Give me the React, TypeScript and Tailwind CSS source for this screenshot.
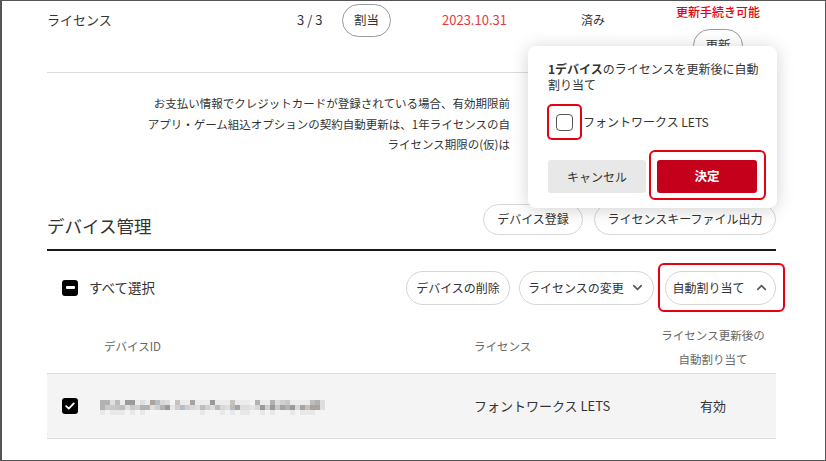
import React from "react";
import { ChevronDown, ChevronUp } from "lucide-react";

const FONT = { fontFamily: '"Noto Sans CJK JP", "Noto Sans", sans-serif' };

function Mosaic() {
  const cols = 45;
  const rows = 3;
  const palette = ["#c9c9c9", "#bdbdbd", "#d8d8d8", "#b2b2b2", "#a8a39e", "#c8c2ba", "#dedede", "#b8bcc4", "#9c9a98", "#cfcfcf"];
  let seed = 11;
  const rnd = () => {
    seed = (seed * 1103515245 + 12345) % 2147483648;
    return seed / 2147483648;
  };
  const gaps = new Set([14, 30]);
  const cells: React.ReactNode[] = [];
  for (let r = 0; r < rows; r++) {
    for (let c = 0; c < cols; c++) {
      let col: string;
      if (gaps.has(c)) col = r === 1 ? "#e6e6e6" : "transparent";
      else if (r === 0) col = rnd() < 0.3 ? "#ececec" : palette[Math.floor(rnd() * palette.length)];
      else if (r === 2) col = rnd() < 0.55 ? "transparent" : "#e8e8e8";
      else col = palette[Math.floor(rnd() * palette.length)];
      cells.push(<div key={r + "-" + c} style={{ backgroundColor: col }} className="w-[5px] h-[5px]" />);
    }
  }
  return <div className="grid grid-cols-[repeat(45,5px)]">{cells}</div>;
}

export default function App() {
  return (
    <div style={FONT} className="relative w-[826px] h-[461px] overflow-hidden bg-white border border-l-2 border-[#555] text-[#333]">
      <div className="ml-[45px] w-[729px]">
        {/* top license row */}
        <div className="h-[72px] border-b border-[#dcdcdc] flex items-start">
          <div className="flex items-center h-[38px]">
            <span className="w-[250px] text-[13px]">ライセンス</span>
            <span className="w-[45px] text-[13px]">3 / 3</span>
            <span className="w-[49px] h-[33px] rounded-full border border-[#999] flex items-center justify-center text-[12.5px]">割当</span>
            <span className="ml-[51px] w-[139px] text-[13px] text-[#e8383d]">2023.10.31</span>
            <span className="text-[12px]">済み</span>
          </div>
          <div className="ml-auto mr-[17px] w-[82px] flex flex-col items-center pt-[2px]">
            <span className="text-[12px] leading-[18px] text-[#e60012] font-medium whitespace-nowrap">更新手続き可能</span>
            <span className="mt-[8px] w-[50px] h-[33px] rounded-full border border-[#999] flex items-center justify-center text-[12.5px]">更新</span>
          </div>
        </div>

        {/* notice */}
        <div className="w-[463px] pt-[20px] text-right text-[11.5px] leading-[20.5px] text-[#333] whitespace-nowrap">
          <div>お支払い情報でクレジットカードが登録されている場合、有効期限前</div>
          <div>アプリ・ゲーム組込オプションの契約自動更新は、1年ライセンスの自</div>
          <div>ライセンス期限の(仮)は</div>
        </div>

        {/* heading */}
        <div className="mt-[49px] h-[47px] border-b-2 border-[#1a1a1a] flex items-start">
          <h2 className="mt-[10px] text-[17.5px] leading-[24px] font-normal">デバイス管理</h2>
          <div className="ml-auto flex gap-[11px]">
            <span className="w-[100px] h-[31px] rounded-full border border-[#d6d6d6] flex items-center justify-center text-[12px] whitespace-nowrap">デバイス登録</span>
            <span className="w-[182px] h-[31px] rounded-full border border-[#d6d6d6] flex items-center justify-center text-[12px] whitespace-nowrap">ライセンスキーファイル出力</span>
          </div>
        </div>

        {/* toolbar */}
        <div className="pt-[20px] pb-[16px] flex items-center">
          <span className="ml-[15px] w-[16px] h-[16px] rounded-[3px] bg-black flex items-center justify-center">
            <span className="w-[9px] h-[3px] bg-white rounded-[1px]" />
          </span>
          <span className="ml-[11px] text-[13.5px]">すべて選択</span>
          <div className="ml-auto flex items-center">
            <span className="w-[104px] h-[34px] rounded-full border border-[#d6d6d6] flex items-center justify-center text-[12px] whitespace-nowrap">デバイスの削除</span>
            <span className="ml-[9px] w-[135px] h-[34px] rounded-full border border-[#d6d6d6] flex items-center justify-center gap-[6px] text-[12px] whitespace-nowrap">
              ライセンスの変更
              <ChevronDown size={15} strokeWidth={2.5} className="text-[#555]" />
            </span>
            <span className="relative ml-[11px] w-[111px] h-[34px] rounded-full border border-[#d6d6d6] flex items-center justify-center gap-[9px] text-[12px] whitespace-nowrap">
              自動割り当て
              <ChevronUp size={15} strokeWidth={2.5} className="text-[#555]" />
              <span className="absolute -left-[8px] -right-[10px] -top-[9px] -bottom-[8px] border-[2.5px] border-[#e60012] rounded-[6px]" />
            </span>
          </div>
        </div>

        {/* table header */}
        <div className="h-[53px] border-b border-[#dcdcdc] flex items-center text-[11.5px] text-[#666]">
          <span className="ml-[57px] w-[370px]">デバイスID</span>
          <span className="w-[176px]">ライセンス</span>
          <span className="w-[126px] text-center leading-[24px]">
            ライセンス更新後の
            <br />
            自動割り当て
          </span>
        </div>

        {/* row */}
        <div className="h-[65px] bg-[#f4f4f4] border-b border-[#dcdcdc] flex items-center">
          <span className="ml-[15px] w-[16px] h-[16px] rounded-[3px] bg-black flex items-center justify-center">
            <svg width="10" height="8" viewBox="0 0 10 8" fill="none">
              <path d="M1.2 4.2 L3.8 6.6 L8.8 1.4" stroke="white" strokeWidth="1.8" strokeLinecap="round" strokeLinejoin="round" />
            </svg>
          </span>
          <span className="ml-[22px] w-[374px] pt-[3px]">
            <Mosaic />
          </span>
          <span className="w-[176px] text-[13px]">フォントワークス LETS</span>
          <span className="w-[126px] text-center text-[13px]">有効</span>
        </div>
      </div>

      {/* popover */}
      <div className="absolute left-[526px] top-[45px] w-[249px] h-[162px] bg-white rounded-[8px] shadow-[0_2px_18px_rgba(0,0,0,0.18)] pl-[20px] pt-[15px]">
        <p className="text-[12px] leading-[16px] text-[#333]">
          <b className="font-bold">1デバイス</b>のライセンスを更新後に自動
          <br />
          割り当て
        </p>
        <div className="mt-[11px] flex items-center">
          <span className="relative -ml-[1px] w-[35px] h-[36px] flex items-center justify-center">
            <span className="w-[17px] h-[17px] rounded-[4px] border-[1.5px] border-[#555] bg-white" />
            <span className="absolute inset-0 border-[2.5px] border-[#e60012] rounded-[5px]" />
          </span>
          <span className="ml-[1px] text-[12px] text-[#333]">フォントワークス LETS</span>
        </div>
        <div className="mt-[20px] flex items-center">
          <span className="w-[98px] h-[33px] rounded-[3px] bg-[#e8e8e8] flex items-center justify-center text-[12px] text-[#333]">キャンセル</span>
          <span className="relative ml-[11px] w-[100px] h-[33px] rounded-[3px] bg-[#c4001a] flex items-center justify-center text-[12.5px] font-bold text-white">
            決定
            <span className="absolute -left-[8px] -right-[9px] -top-[10px] -bottom-[7px] border-[2.5px] border-[#e60012] rounded-[6px]" />
          </span>
        </div>
      </div>
    </div>
  );
}
